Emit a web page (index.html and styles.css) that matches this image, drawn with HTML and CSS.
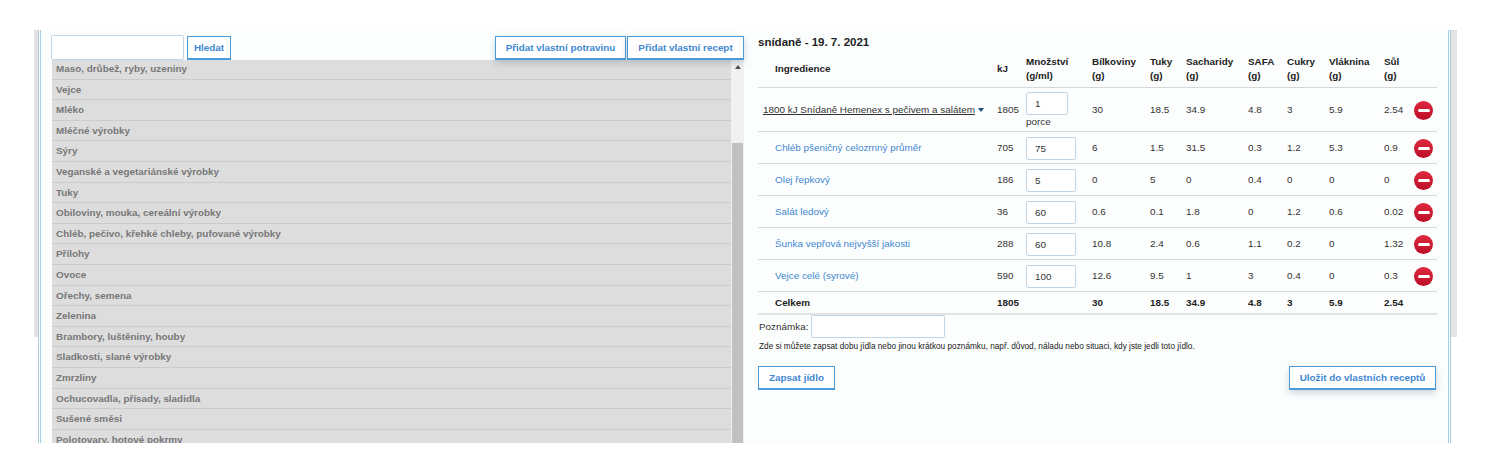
FILE: index.html
```html
<!DOCTYPE html>
<html lang="en">
<head>
    <meta charset="UTF-8">
    <title>Jídelníček</title>
    <link rel="stylesheet" href="styles.css">
</head>
<body>
    <div class="page">
        <div class="frame">
            <div class="left-panel">
                <div class="toolbar">
                    <input type="text" class="search-input">
                    <button class="btn btn-search">Hledat</button>
                    <button class="btn btn-raised btn-first">Přidat vlastní potravinu</button>
                    <button class="btn btn-raised">Přidat vlastní recept</button>
                </div>
                <div class="list-wrap">
                    <ul class="category-list">
                        <li>Maso, drůbež, ryby, uzeniny</li>
                        <li>Vejce</li>
                        <li>Mléko</li>
                        <li>Mléčné výrobky</li>
                        <li>Sýry</li>
                        <li>Veganské a vegetariánské výrobky</li>
                        <li>Tuky</li>
                        <li>Obiloviny, mouka, cereální výrobky</li>
                        <li>Chléb, pečivo, křehké chleby, pufované výrobky</li>
                        <li>Přílohy</li>
                        <li>Ovoce</li>
                        <li>Ořechy, semena</li>
                        <li>Zelenina</li>
                        <li>Brambory, luštěniny, houby</li>
                        <li>Sladkosti, slané výrobky</li>
                        <li>Zmrzliny</li>
                        <li>Ochucovadla, přísady, sladidla</li>
                        <li>Sušené směsi</li>
                        <li>Polotovary, hotové pokrmy</li>
                    </ul>
                    <div class="scrollbar">
                        <span class="scroll-arrow"></span>
                        <div class="scroll-thumb"></div>
                    </div>
                </div>
            </div>

            <div class="right-panel">
                <h2 class="meal-title">snídaně - 19. 7. 2021</h2>
                <table class="meal-table">
                    <colgroup>
                        <col class="col-name">
                        <col class="col-kj">
                        <col class="col-amount">
                        <col class="col-protein">
                        <col class="col-fat">
                        <col class="col-carb">
                        <col class="col-safa">
                        <col class="col-sugar">
                        <col class="col-fibre">
                        <col class="col-salt">
                        <col class="col-action">
                    </colgroup>
                    <thead>
                        <tr>
                            <th class="indent">Ingredience</th>
                            <th>kJ</th>
                            <th>Množství<br>(g/ml)</th>
                            <th>Bílkoviny<br>(g)</th>
                            <th>Tuky<br>(g)</th>
                            <th>Sacharidy<br>(g)</th>
                            <th>SAFA<br>(g)</th>
                            <th>Cukry<br>(g)</th>
                            <th>Vláknina<br>(g)</th>
                            <th>Sůl<br>(g)</th>
                            <th></th>
                        </tr>
                    </thead>
                    <tbody>
                        <tr class="row-recipe">
                            <td class="recipe-cell"><a class="recipe-link">1800 kJ Snídaně Hemenex s pečivem a salátem</a><span class="caret"></span></td>
                            <td>1805</td>
                            <td><input type="text" class="amount-input amount-small" value="1"><div class="unit">porce</div></td>
                            <td>30</td><td>18.5</td><td>34.9</td><td>4.8</td><td>3</td><td>5.9</td><td>2.54</td>
                            <td><span class="remove"></span></td>
                        </tr>
                        <tr>
                            <td class="indent"><a class="food-link">Chléb pšeničný celozrnný průměr</a></td>
                            <td>705</td>
                            <td><input type="text" class="amount-input" value="75"></td>
                            <td>6</td><td>1.5</td><td>31.5</td><td>0.3</td><td>1.2</td><td>5.3</td><td>0.9</td>
                            <td><span class="remove"></span></td>
                        </tr>
                        <tr>
                            <td class="indent"><a class="food-link">Olej řepkový</a></td>
                            <td>186</td>
                            <td><input type="text" class="amount-input" value="5"></td>
                            <td>0</td><td>5</td><td>0</td><td>0.4</td><td>0</td><td>0</td><td>0</td>
                            <td><span class="remove"></span></td>
                        </tr>
                        <tr>
                            <td class="indent"><a class="food-link">Salát ledový</a></td>
                            <td>36</td>
                            <td><input type="text" class="amount-input" value="60"></td>
                            <td>0.6</td><td>0.1</td><td>1.8</td><td>0</td><td>1.2</td><td>0.6</td><td>0.02</td>
                            <td><span class="remove"></span></td>
                        </tr>
                        <tr>
                            <td class="indent"><a class="food-link">Šunka vepřová nejvyšší jakosti</a></td>
                            <td>288</td>
                            <td><input type="text" class="amount-input" value="60"></td>
                            <td>10.8</td><td>2.4</td><td>0.6</td><td>1.1</td><td>0.2</td><td>0</td><td>1.32</td>
                            <td><span class="remove"></span></td>
                        </tr>
                        <tr>
                            <td class="indent"><a class="food-link">Vejce celé (syrové)</a></td>
                            <td>590</td>
                            <td><input type="text" class="amount-input" value="100"></td>
                            <td>12.6</td><td>9.5</td><td>1</td><td>3</td><td>0.4</td><td>0</td><td>0.3</td>
                            <td><span class="remove"></span></td>
                        </tr>
                        <tr class="row-total">
                            <td class="indent">Celkem</td>
                            <td>1805</td>
                            <td></td>
                            <td>30</td><td>18.5</td><td>34.9</td><td>4.8</td><td>3</td><td>5.9</td><td>2.54</td>
                            <td></td>
                        </tr>
                    </tbody>
                </table>
                <div class="note-row">
                    <label for="note">Poznámka:</label>
                    <input type="text" id="note" class="note-input">
                </div>
                <p class="note-help">Zde si můžete zapsat dobu jídla nebo jinou krátkou poznámku, např. důvod, náladu nebo situaci, kdy jste jedli toto jídlo.</p>
                <div class="actions">
                    <button class="btn btn-zapsat">Zapsat jídlo</button>
                    <button class="btn btn-raised btn-ulozit">Uložit do vlastních receptů</button>
                </div>
            </div>
        </div>
    </div>
</body>
</html>
```

FILE: styles.css
```css
* {
    margin: 0;
    padding: 0;
    box-sizing: border-box;
}

body {
    font-family: 'Liberation Sans', Arial, sans-serif;
    font-size: 9.9px;
    background-color: #fff;
    color: #333;
}

.page {
    margin: 30px 35px 0 34px;
    height: 413px;
    background:
        linear-gradient(#e4e4e4, #e4e4e4) left top / 4px 307px no-repeat,
        linear-gradient(#e4e4e4, #e4e4e4) right top / 6px 307px no-repeat;
}

.frame {
    display: flex;
    gap: 14px;
    height: 100%;
    margin: 0 6px 0 4px;
    padding: 5px 11px 0 10px;
    background-color: #fcfefe;
    border-left: 3px double #a8cbe6;
    border-right: 3px double #a8cbe6;
    overflow: hidden;
}

.left-panel {
    flex: 0 0 693px;
    display: flex;
    flex-direction: column;
}

.toolbar {
    display: flex;
    flex: 0 0 24px;
    align-items: flex-start;
}

.search-input {
    width: 133px;
    height: 25px;
    background-color: #fff;
    border: 1px solid #c0d6e6;
    border-radius: 2px;
}

.btn {
    height: 24px;
    background-color: #fff;
    border: 1px solid #4a9bd8;
    border-bottom-width: 2px;
    color: #3f87d2;
    font-family: inherit;
    font-size: 9.9px;
    font-weight: bold;
}

.btn-search {
    width: 44px;
    margin: 1px 0 0 3px;
    position: relative;
    z-index: 1;
}

.btn-raised {
    box-shadow: 0 3px 7px rgba(40, 70, 100, 0.22);
    position: relative;
    z-index: 1;
}

.toolbar .btn-raised {
    width: 117px;
    margin: 1px 0 0 1px;
}

.toolbar .btn-first {
    width: 131px;
    margin-left: auto;
}

.list-wrap {
    flex: 1;
    display: flex;
    min-height: 0;
    margin-left: 1px;
    overflow: hidden;
}

.category-list {
    flex: 1;
    margin-top: -1px;
    list-style: none;
    background-color: #ddd;
}

.category-list li {
    height: 20.6px;
    padding: 4px 0 0 4px;
    border-bottom: 1px solid #ccc;
    color: #777;
    font-weight: bold;
    line-height: 12px;
}

.scrollbar {
    flex: 0 0 13px;
    display: flex;
    flex-direction: column;
    align-items: center;
    background-color: #f1f1f1;
}

.scroll-arrow {
    width: 0;
    height: 0;
    margin-top: 5px;
    border-left: 3.5px solid transparent;
    border-right: 3.5px solid transparent;
    border-bottom: 4px solid #505050;
}

.scroll-thumb {
    flex: 1;
    width: 11px;
    margin-top: 74px;
    background-color: #c1c1c1;
}

.right-panel {
    flex: 1;
    min-width: 0;
}

.meal-title {
    height: 18px;
    font-size: 11.5px;
    font-weight: bold;
    line-height: 14px;
    color: #222;
}

.meal-table {
    width: 679px;
    table-layout: fixed;
    border-collapse: collapse;
}

.col-name { width: 239px; }
.col-kj { width: 29px; }
.col-amount { width: 66px; }
.col-protein { width: 58px; }
.col-fat { width: 36px; }
.col-carb { width: 62px; }
.col-safa { width: 39px; }
.col-sugar { width: 42px; }
.col-fibre { width: 55px; }
.col-salt { width: 30px; }
.col-action { width: 23px; }

.meal-table th {
    height: 34px;
    padding: 0 0 2px;
    border-bottom: 1px solid #d5d8d8;
    color: #222;
    font-weight: bold;
    text-align: left;
    line-height: 14px;
}

.meal-table td {
    height: 32px;
    padding: 0;
    border-bottom: 1px solid #d5d8d8;
}

.meal-table .indent {
    padding-left: 17px;
}

.row-recipe td {
    height: 44px;
}

.meal-table .recipe-cell {
    padding-left: 5px;
    white-space: nowrap;
}

.recipe-link {
    color: #333;
    text-decoration: underline;
}

.caret {
    display: inline-block;
    width: 0;
    height: 0;
    margin-left: 3px;
    vertical-align: 1px;
    border-left: 3.5px solid transparent;
    border-right: 3.5px solid transparent;
    border-top: 4px solid #1f4e79;
}

.food-link {
    color: #3f87d2;
}

.amount-input {
    display: block;
    width: 50px;
    height: 23px;
    margin-top: 2px;
    padding-left: 8px;
    background-color: #fff;
    border: 1px solid #c0d6e6;
    border-radius: 2px;
    color: #333;
    font-family: inherit;
    font-size: 9.9px;
}

.amount-small {
    width: 42px;
}

.unit {
    margin-top: 1px;
    line-height: 12px;
}

.remove {
    display: block;
    position: relative;
    width: 19px;
    height: 19px;
    margin-top: 2px;
    border-radius: 50%;
    background: linear-gradient(#e0263f, #bb0f27);
}

.remove::after {
    content: "";
    position: absolute;
    left: 3.5px;
    top: 8px;
    width: 12px;
    height: 3.5px;
    border-radius: 2px;
    background-color: #fff;
}

.meal-table .row-total td {
    height: 23px;
    border-bottom: 2px solid #e2e4e4;
    color: #222;
    font-weight: bold;
}

.note-row {
    display: flex;
    align-items: center;
    gap: 3px;
    padding-left: 1px;
}

.note-input {
    width: 134px;
    height: 23px;
    background-color: #fff;
    border: 1px solid #c0d6e6;
    border-radius: 2px;
}

.note-help {
    margin: 3px 0 0 1px;
    font-size: 8.25px;
    line-height: 11px;
    color: #222;
}

.actions {
    display: flex;
    justify-content: space-between;
    width: 678px;
    margin-top: 14px;
}

.btn-zapsat {
    width: 77px;
}

.btn-ulozit {
    width: 147px;
}
```
